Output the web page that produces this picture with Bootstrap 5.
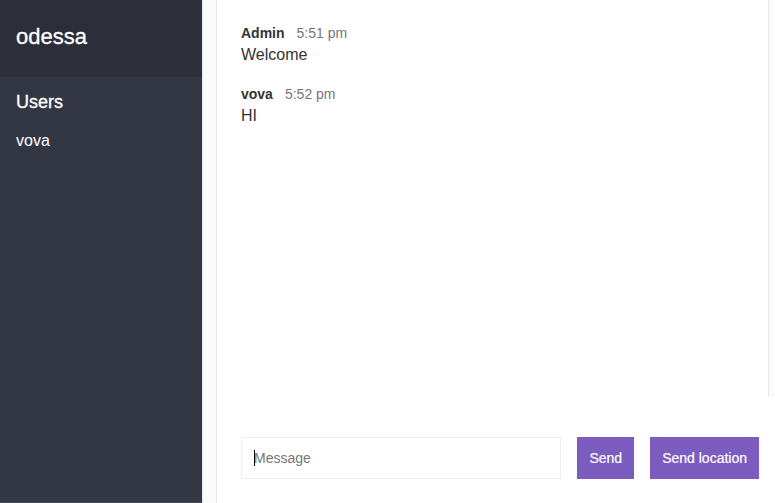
<!DOCTYPE html>
<html lang="en">
<head>
<meta charset="utf-8">
<meta name="viewport" content="width=device-width, initial-scale=1">
<title>odessa</title>
<link href="https://cdn.jsdelivr.net/npm/bootstrap@5.3.0/dist/css/bootstrap.min.css" rel="stylesheet">
<style>
  body { font-family: "Liberation Sans", Arial, sans-serif; font-size: 16px; line-height: 24px; color: #333; background: #fff; }
  .sidebar { width: 202px; background: #333744; border-bottom: 1px solid #484b58; }
  .room-title { font-size: 22px; line-height: 29px; background: #2c2e3a; padding: 22px 16px 26px; font-weight: 400; }
  .users-title { font-size: 18px; line-height: 22px; font-weight: 400; margin-bottom: 16px; }
  .users-title, .room-title { -webkit-text-stroke: .3px #fff; }
  .users { padding: 14px 16px; }
  .gutter { width: 15px; background: #fafafa; border: solid #e6e6e6; border-width: 0 1px; }
  .log { padding: 23px 24px; }
  .scroll-track { width: 7px; background: #fafafa; border-left: 1px solid #e6e6e6; }
  .message { margin-bottom: 17px; }
  .meta { font-size: 14px; line-height: 20px; gap: 12px; }
  .meta time { color: #777; }
  .compose { padding: 40px 16px 24px 24px; gap: 16px; font-size: 14px; }
  .field::before { content: ""; position: absolute; left: 13px; top: 13px; width: 1px; height: 16px; background: #000; }
  .field .form-control { height: 42px; padding: 0 12px; font-size: 14px; border-color: #eee; color: #333; box-shadow: none; }
  .field .form-control::placeholder { color: #777; }
  .btn-send { --bs-btn-bg: #7c5cbf; --bs-btn-color: #fff; --bs-btn-hover-bg: #6b47b8; --bs-btn-hover-color: #fff; --bs-btn-font-size: 14px; --bs-btn-padding-x: 12px; --bs-btn-border-width: 0; height: 42px; -webkit-text-stroke: .2px #fff; }
</style>
<script src="https://cdn.jsdelivr.net/npm/bootstrap@5.3.0/dist/js/bootstrap.bundle.min.js"></script>
</head>
<body>
<div class="d-flex vh-100 overflow-hidden">
  <aside class="sidebar flex-shrink-0 text-white">
    <h1 class="room-title m-0">odessa</h1>
    <section class="users">
      <h2 class="users-title">Users</h2>
      <ul class="list-unstyled m-0"><li>vova</li></ul>
    </section>
  </aside>
  <div class="gutter flex-shrink-0"></div>
  <main class="d-flex flex-column flex-grow-1">
    <div class="d-flex flex-grow-1 overflow-hidden">
      <div class="log flex-grow-1">
        <article class="message">
          <div class="meta d-flex"><strong>Admin</strong><time>5:51 pm</time></div>
          <div>Welcome</div>
        </article>
        <article class="message">
          <div class="meta d-flex"><strong>vova</strong><time>5:52 pm</time></div>
          <div>HI</div>
        </article>
      </div>
      <div class="scroll-track"></div>
    </div>
    <form class="compose d-flex">
      <div class="field position-relative flex-grow-1">
        <input class="form-control rounded-0" type="text" placeholder="Message" aria-label="Message" autocomplete="off">
      </div>
      <button class="btn btn-send rounded-0 text-nowrap" type="button">Send</button>
      <button class="btn btn-send rounded-0 text-nowrap" type="button">Send location</button>
    </form>
  </main>
</div>
</body>
</html>
